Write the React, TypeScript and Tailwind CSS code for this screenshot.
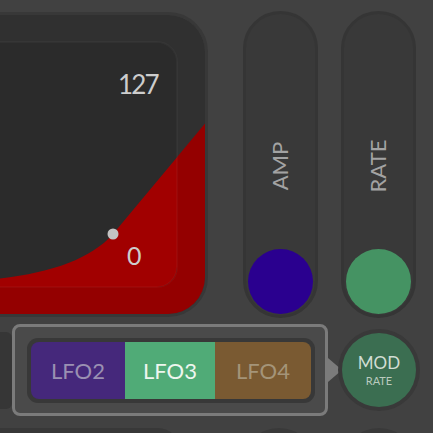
import React from "react";

const font = { fontFamily: "Lato, 'Open Sans', sans-serif" };

function EnvelopeChart() {
  // chart drawn in panel content coordinates (392 x 299)
  const curve =
    "M 0 268 L 100 268 C 200 268, 268 255, 300 219 L 430 63 L 430 320 L 0 320 Z";
  return (
    <svg width="392" height="299" viewBox="0 0 392 299" className="block">
      <defs>
        <clipPath id="inner">
          <rect x="20" y="27" width="344" height="245" rx="20" />
        </clipPath>
      </defs>
      <rect x="0" y="0" width="392" height="299" fill="#303030" />
      <path d={curve} fill="#940000" />
      <g clipPath="url(#inner)">
        <rect x="20" y="27" width="344" height="245" fill="#2b2b2b" />
        <path d={curve} fill="#a10000" />
      </g>
      <rect
        x="20"
        y="27"
        width="344"
        height="245"
        rx="20"
        fill="none"
        stroke="rgba(255,255,255,0.03)"
        strokeWidth="2"
      />
      <circle cx="300" cy="219" r="5.5" fill="#c3c3c3" />
    </svg>
  );
}

function SliderTrack({ label, color }: { label: string; color: string }) {
  return (
    <div className="w-[75px] h-[307px] rounded-full bg-[#393939] border-[3px] border-[#353535] flex flex-col items-center">
      <div className="flex-1 flex items-center justify-center pt-[68px]">
        <span
          className="text-[22px] text-[#a3a3a3] -rotate-90 whitespace-nowrap leading-none"
          style={font}
        >
          {label}
        </span>
      </div>
      <div className={`w-[65px] h-[65px] rounded-full mb-[1px] ${color}`} />
    </div>
  );
}

export default function App() {
  return (
    <div
      className="w-[433px] h-[433px] overflow-hidden bg-[#414141] flex flex-col"
      style={font}
    >
      {/* top row: envelope display + sliders */}
      <div className="flex items-start shrink-0">
        <div className="relative ml-[-190px] mt-[12px] w-[398px] h-[305px] rounded-[40px] border-[3px] border-[#383838] overflow-hidden shrink-0">
          <EnvelopeChart />
          <span className="absolute left-[305px] top-[56px] text-[26px] leading-none tracking-[-0.07em] text-[#cdcdcd]">
            127
          </span>
          <span className="absolute left-[314px] top-[228px] text-[25px] leading-none text-[#cdcdcd]">
            0
          </span>
        </div>
        <div className="ml-[35px] mt-[11px] shrink-0">
          <SliderTrack label="AMP" color="bg-[#2a008f]" />
        </div>
        <div className="ml-[23px] mt-[11px] shrink-0">
          <SliderTrack label="RATE" color="bg-[#459363]" />
        </div>
      </div>

      {/* middle row: LFO selector popup + mod knob */}
      <div className="flex items-center mt-[6px] shrink-0">
        <div className="w-[12px] h-[77px] bg-[#363636] rounded-r-[6px] shrink-0" />
        <div className="w-[316px] h-[92px] rounded-[8px] border-[3px] border-[#7b7b7b] bg-[#4a4a4a] flex items-center pl-[12px] shrink-0">
          <div className="w-[288px] h-[65px] rounded-[11px] bg-[#383838] p-[4px] flex">
            <div className="flex-1 flex rounded-[8px] overflow-hidden">
              <div className="w-[94px] bg-[#45287b] flex items-center justify-center text-[22px] text-[#9a90b2]">
                LFO2
              </div>
              <div className="w-[90px] bg-[#50ab77] flex items-center justify-center text-[22px] text-[#eef6ef]">
                LFO3
              </div>
              <div className="flex-1 bg-[#7a5a32] flex items-center justify-center text-[22px] text-[#a49479]">
                LFO4
              </div>
            </div>
          </div>
        </div>
        <div className="w-0 h-0 border-y-[12px] border-y-transparent border-l-[14px] border-l-[#7b7b7b] shrink-0" />
        <div className="w-[74px] h-[74px] rounded-full bg-[#3b6e51] shadow-[0_0_0_4px_#393939] flex flex-col items-center justify-center shrink-0">
          <span className="text-[17px] leading-none text-[#d2ddd4]">MOD</span>
          <span className="text-[11px] leading-none mt-[4px] text-[#b9cabd]">
            RATE
          </span>
        </div>
      </div>

      {/* bottom row: next panels peeking in */}
      <div className="flex items-start mt-[12px] shrink-0">
        <div className="w-[180px] h-[40px] bg-[#383838] rounded-tr-[22px] shrink-0" />
        <div className="ml-[62px] w-[74px] h-[74px] rounded-full bg-[#393939] shrink-0" />
        <div className="ml-[26px] w-[74px] h-[74px] rounded-full bg-[#393939] shrink-0" />
      </div>
    </div>
  );
}
